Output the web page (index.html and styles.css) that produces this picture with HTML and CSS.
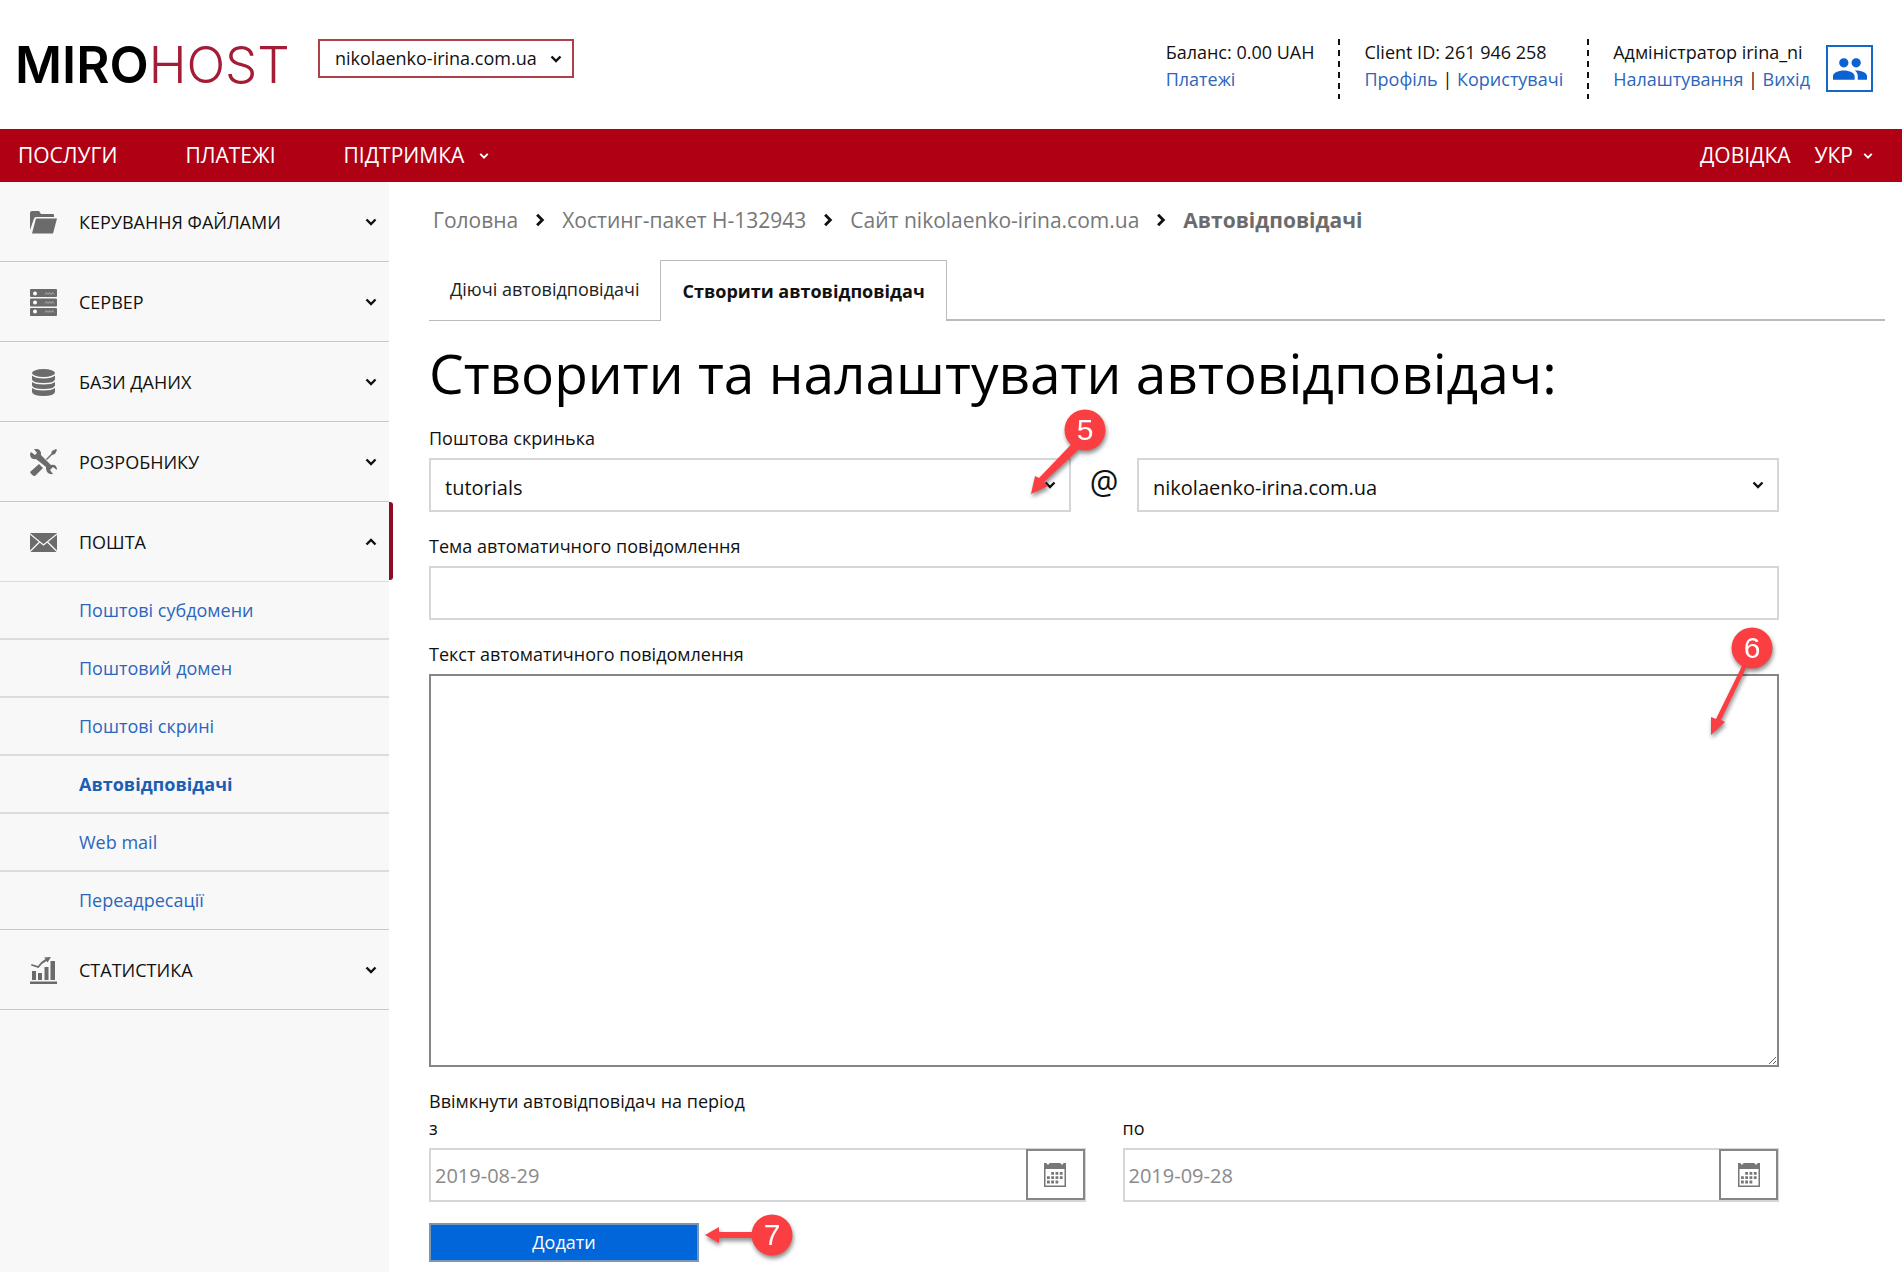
FILE: index.html
```html
<!DOCTYPE html>
<html lang="uk">
<head>
<meta charset="utf-8">
<title>Автовідповідачі — MIROHOST</title>
<meta name="viewport" content="width=device-width, initial-scale=1">
<link rel="stylesheet" href="styles.css">
</head>
<body>
<svg class="defs" aria-hidden="true">
  <symbol id="chev" viewBox="0 0 12 8"><path d="M1.500 1.500 6 6l4.500-4.500" fill="none" stroke="currentColor" stroke-width="2.400"/></symbol>
  <symbol id="cal" viewBox="0 0 22 24"><path fill="currentColor" d="M0 0h2.500q.2 1.500 1.500 1.500T5.500 0h11q.2 1.500 1.500 1.500T19.500 0H22v24H0zM1.500 6v16.500h19V6z"/><path fill="currentColor" d="M7.200 9H10v2.800H7.200zM11.500 9h2.800v2.800h-2.800zM15.800 9h2.800v2.800h-2.800zM3 13.300h2.800v2.800H3zM7.200 13.300H10v2.800H7.200zM11.500 13.300h2.800v2.800h-2.800zM15.800 13.300h2.800v2.800h-2.800zM3 17.600h2.800v2.800H3zM7.200 17.600H10v2.800H7.200zM11.500 17.600h2.800v2.800h-2.800z"/></symbol>
</svg>
<header class="header">
  <a class="logo" href="#"><span class="logo-miro">MIRO</span><span class="logo-host">HOST</span></a>
  <div class="select-wrap site-select">
    <select aria-label="Сайт"><option>nikolaenko-irina.com.ua</option></select>
    <svg class="chev"><use href="#chev"/></svg>
  </div>
  <div class="account">
    <div class="account-col"><span>Баланс: 0.00 UAH</span><span><a href="#">Платежі</a></span></div>
    <div class="account-col"><span>Client ID: 261 946 258</span><span><a href="#">Профіль</a> | <a href="#">Користувачі</a></span></div>
    <div class="account-col"><span>Адміністратор irina_ni</span><span><a href="#">Налаштування</a> | <a href="#">Вихід</a></span></div>
    <button class="users" type="button" aria-label="Користувачі">
      <svg viewBox="1 5 22 14"><path fill="currentColor" d="M16 11c1.660 0 2.990-1.340 2.990-3S17.660 5 16 5s-3 1.340-3 3 1.340 3 3 3zm-8 0c1.660 0 2.990-1.340 2.990-3S9.660 5 8 5 5 6.340 5 8s1.340 3 3 3zm0 2c-2.330 0-7 1.170-7 3.500V19h14v-2.500c0-2.330-4.670-3.500-7-3.500zm8 0c-.290 0-.620.020-.970.050 1.160.840 1.970 1.970 1.970 3.450V19h6v-2.500c0-2.330-4.670-3.500-7-3.500z"/></svg>
    </button>
  </div>
</header>
<nav class="nav">
  <a href="#">ПОСЛУГИ</a>
  <a href="#">ПЛАТЕЖІ</a>
  <a class="has-menu" href="#">ПІДТРИМКА <svg class="chev"><use href="#chev"/></svg></a>
  <div class="nav-right">
    <a href="#">ДОВІДКА</a>
    <a class="lang" href="#">УКР <svg class="chev"><use href="#chev"/></svg></a>
  </div>
</nav>
<div class="layout">
  <aside class="sidebar">
    <a class="item" href="#">
      <svg class="icon" viewBox="0 0 27 27"><path d="M0 24V4q0-2 2-2h7l2 3h12q1 0 1 1v2H6q-1.500 0-2 1.500L0 21zM6 9.500h21L23 24.500H2z"/></svg>
      <span>КЕРУВАННЯ ФАЙЛАМИ</span><svg class="chev"><use href="#chev"/></svg></a>
    <a class="item" href="#">
      <svg class="icon" viewBox="0 0 27 27"><rect width="27" height="8" rx="1"/><rect y="9.500" width="27" height="8" rx="1"/><rect y="19" width="27" height="8" rx="1"/><g fill="#fff"><circle cx="5" cy="4.500" r="2"/><circle cx="5" cy="13.500" r="2"/><circle cx="5" cy="22.500" r="2"/></g><path d="M15 5.500l1.500-2 1.500 2 1.500-2 1.500 2 1.500-2 1.500 2M15 14.500l1.500-2 1.500 2 1.500-2 1.500 2 1.500-2 1.500 2M15 23.500l1.500-2 1.500 2 1.500-2 1.500 2 1.500-2 1.500 2" fill="none" stroke="#bbb" stroke-width=".8"/></svg>
      <span>СЕРВЕР</span><svg class="chev"><use href="#chev"/></svg></a>
    <a class="item" href="#">
      <svg class="icon" viewBox="0 0 27 27"><ellipse cx="13.500" cy="4" rx="11.500" ry="4"/><path d="M2 6.500q3 3 11.500 3t11.500-3v4q-1 3.500-11.500 3.500T2 10.500zM2 13q3 2.500 11.500 2.500T25 13v3.500q-1 3.500-11.500 3.500T2 16.500zM2 19q3 2.500 11.500 2.500T25 19v4q-1 4-11.500 4T2 23z"/></svg>
      <span>БАЗИ ДАНИХ</span><svg class="chev"><use href="#chev"/></svg></a>
    <a class="item" href="#">
      <svg class="icon" viewBox="0 0 27 27"><path d="M0 5 1 3l4 3 2-2-3-4q6-1 7 4v2l10 10q6-1 6 5l-4-3-3 3 3 4q-6 1-7-5v-2L6 10Q0 11 0 5zM16 10l5-5 1-3 4-2 1 1-2 4-3 1-5 5zM9 15l4 4-8 8q-3 0-5-4z"/></svg>
      <span>РОЗРОБНИКУ</span><svg class="chev"><use href="#chev"/></svg></a>
    <a class="item open" href="#">
      <svg class="icon" viewBox="0 0 27 27"><rect y="4" width="27" height="19" rx="1"/><path d="M0 5l13.500 11L27 5M0 22.500 9.500 13M27 22.500 17.500 13" fill="none" stroke="#f8f8f8" stroke-width="1.300"/></svg>
      <span>ПОШТА</span><svg class="chev"><use href="#chev"/></svg></a>
    <a class="subitem" href="#">Поштові субдомени</a>
    <a class="subitem" href="#">Поштовий домен</a>
    <a class="subitem" href="#">Поштові скрині</a>
    <a class="subitem current" href="#">Автовідповідачі</a>
    <a class="subitem" href="#">Web mail</a>
    <a class="subitem last" href="#">Переадресації</a>
    <a class="item" href="#">
      <svg class="icon" viewBox="0 0 27 27"><path d="M0 24.500h27V27H0zM2 14h4v9H2zM8 16h4v7H8zM14.500 10h4v13h-4zM20.500 4H25v19h-4.500z"/><path d="M14 .5 21 0l-3.500 5.500-1-1.500Q12 6 8.500 11L1 8.500l.5-1.500L8 9q3.500-5 7.500-7z"/></svg>
      <span>СТАТИСТИКА</span><svg class="chev"><use href="#chev"/></svg></a>
  </aside>
  <main class="main">
    <nav class="crumbs" aria-label="Навігація">
      <a href="#">Головна</a><svg class="chev"><use href="#chev"/></svg>
      <a href="#">Хостинг-пакет H-132943</a><svg class="chev"><use href="#chev"/></svg>
      <a href="#">Сайт nikolaenko-irina.com.ua</a><svg class="chev"><use href="#chev"/></svg>
      <b>Автовідповідачі</b>
    </nav>
    <div class="tabs">
      <a class="tab" href="#">Діючі автовідповідачі</a>
      <a class="tab active" href="#">Створити автовідповідач</a>
    </div>
    <h1>Створити та налаштувати автовідповідач:</h1>
    <form class="form">
      <label for="box">Поштова скринька</label>
      <div class="mailbox">
        <div class="select-wrap">
          <select id="box"><option>tutorials</option></select>
          <svg class="chev"><use href="#chev"/></svg>
          <svg class="callout c5" viewBox="0 0 90 100"><path d="M64 40 17 84l4 4-17 8 4-18 4 2 46-48z"/><circle cx="58" cy="32" r="20.500"/><text x="58" y="42">5</text></svg>
        </div>
        <span class="at">@</span>
        <div class="select-wrap">
          <select aria-label="Домен"><option>nikolaenko-irina.com.ua</option></select>
          <svg class="chev"><use href="#chev"/></svg>
        </div>
      </div>
      <label for="subject">Тема автоматичного повідомлення</label>
      <input class="field" id="subject" type="text">
      <label for="body">Текст автоматичного повідомлення</label>
      <div class="body-wrap">
        <textarea id="body"></textarea>
        <svg class="callout c6" viewBox="0 0 80 120"><path d="M46 39 20 93l4 2-14 13V90l5 2 26-53z"/><circle cx="51" cy="21" r="20.500"/><text x="51" y="31">6</text></svg>
      </div>
      <div class="period-title">Ввімкнути автовідповідач на період</div>
      <div class="period">
        <div><label for="from">з</label>
          <div class="date"><input id="from" type="text" value="2019-08-29"><button type="button" aria-label="Календар"><svg><use href="#cal"/></svg></button></div></div>
        <div><label for="to">по</label>
          <div class="date"><input id="to" type="text" value="2019-09-28"><button type="button" aria-label="Календар"><svg><use href="#cal"/></svg></button></div></div>
      </div>
      <div class="submit-wrap">
        <button class="submit" type="submit">Додати</button>
        <svg class="callout c7" viewBox="0 0 100 60"><path d="M50 21H16v-5L2 24l14 8v-5h34z"/><circle cx="69" cy="24" r="20.500"/><text x="69" y="34">7</text></svg>
      </div>
    </form>
  </main>
</div>
</body>
</html>
```
FILE: styles.css
```css
* { box-sizing: border-box; }
body {
  margin: 0;
  background: #fff;
  color: #111;
  font: 18px/27px "Open Sans", sans-serif;
}
a { color: #2b66bd; text-decoration: none; }
select, input, textarea, button { font: inherit; color: inherit; border-radius: 0; }
.defs { display: none; }
.chev { width: 12px; height: 8px; flex: none; color: #111; }

.header { display: flex; align-items: flex-start; height: 129px; padding: 39px 29px 0 15px; }
.logo { display: flex; width: 273px; color: #000; font: 51px/51px Inter, sans-serif; }
.logo-miro { font-weight: 600; }
.logo-host { font-weight: 300; color: #a51c36; }

.select-wrap { position: relative; }
.select-wrap select { appearance: none; width: 100%; background: #fff; }
.select-wrap .chev { position: absolute; right: 15px; top: 50%; margin-top: -4px; pointer-events: none; }
.site-select { margin-left: 30px; width: 256px; }
.site-select select { height: 39px; padding: 0 15px; border: 2px solid #b04048; font-size: 18px; }
.site-select .chev { right: 12px; }

.account { display: flex; margin-left: auto; }
.account-col { display: flex; flex-direction: column; height: 60px; white-space: nowrap; }
.account-col + .account-col {
  margin-left: 24px;
  padding-left: 26px;
  background: repeating-linear-gradient(#111 0 6px, transparent 6px 11px) left top / 2px 100% no-repeat;
}
.users {
  display: flex; align-items: center; justify-content: center;
  width: 47px; height: 47px; margin: 6px 0 0 16px; padding: 0;
  border: 2px solid #1268c4; background: #fff; color: #0b63d1;
}
.users svg { width: 34px; height: 22px; }

.nav { display: flex; align-items: center; gap: 68px; height: 53px; padding: 0 29px 0 18px; background: #b00014; font-size: 21px; }
.nav a { color: #fff; display: flex; align-items: center; gap: 15px; }
.nav .chev { color: #fff; width: 10px; }
.nav-right { display: flex; gap: 24px; margin-left: auto; }
.nav .lang { gap: 10px; }

.layout { display: flex; min-height: calc(100vh - 182px); }
.sidebar { flex: none; width: 389px; background: #f8f8f8; }
.item { position: relative; display: flex; align-items: center; height: 80px; padding: 1px 12px 0 30px; border-bottom: 1px solid #c8c8c8; color: #111; }
.item span { flex: 1; margin-left: 22px; }
.icon { width: 27px; height: 27px; fill: #6b6b6b; }
.open { border-color: #dcdcdc; }
.open .chev { transform: rotate(180deg); }
.open::after { content: ""; position: absolute; left: 100%; top: 0; bottom: 1px; width: 4px; background: #900a26; border-radius: 0 3px 3px 0; }
.subitem { display: flex; align-items: center; height: 58px; padding-left: 79px; border-bottom: 2px solid #dcdcdc; }
.current { font-weight: 700; color: #1a5fb4; }
.last { border-bottom: 1px solid #c8c8c8; }

.main { flex: 1; min-width: 0; padding: 23px 17px 10px 40px; }
.crumbs { display: flex; align-items: center; padding-left: 4px; font-size: 21px; line-height: 30px; color: #6b6b6b; }
.crumbs a { color: #777; }
.crumbs .chev { width: 14px; height: 10px; margin: 0 15px; transform: rotate(-90deg); }
.tabs { display: flex; align-items: flex-end; margin-top: 25px; }
.tabs::after { content: ""; flex: 1; border-bottom: 2px solid #bbb; }
.tab { height: 60px; padding: 15px 21px 0; border-bottom: 1px solid #bbb; color: #222; }
.active { height: 61px; padding-top: 17px; border: 1px solid #bbb; border-bottom: 0; font-weight: 700; color: #111; }
h1 { margin: 14px 0; font-size: 55px; line-height: 76px; font-weight: 400; color: #000; white-space: nowrap; }

.form { margin-right: 106px; }
.form label { display: block; }
.mailbox { display: grid; grid-template-columns: 1fr 66px 1fr; margin: 6px 0 21px; }
.at { text-align: center; font-size: 32px; line-height: 48px; }
.mailbox select, .field, .date { height: 54px; border: 2px solid #d6d6d6; font-size: 20px; }
.mailbox select { padding: 4px 14px 0; }
.field { display: block; width: 100%; margin: 6px 0 21px; padding: 0 5px; }
.body-wrap { position: relative; margin-top: 6px; }
textarea { display: block; width: 100%; height: 393px; border: 2px solid #868686; padding: 6px; resize: vertical; }
.period-title { margin-top: 21px; }
.period { display: grid; grid-template-columns: 1fr 1fr; gap: 37px; }
.date { display: flex; margin-top: 6px; background: #fff; }
.date input { flex: 1; min-width: 0; padding: 0 4px; border: 0; background: none; color: #8a8a8a; }
.date button { display: flex; align-items: center; justify-content: center; width: 59px; margin: -1px -1px 0 0; padding: 0; border: 2px solid #868686; background: #fff; color: #777; }
.date svg { width: 22px; height: 24px; }
.submit-wrap { position: relative; width: 270px; margin-top: 21px; }
.submit { display: block; width: 100%; height: 39px; padding: 0; border: 2px solid #7b95b4; background: #0066d9; color: #fff; }

.callout { position: absolute; overflow: visible; pointer-events: none; fill: #fb3e42; filter: drop-shadow(1px 3px 2px rgba(0, 0, 0, .45)); }
.callout text { fill: #fff; font: 30px "Liberation Sans", sans-serif; text-anchor: middle; }
.select-wrap .c5 { width: 90px; height: 100px; right: -46px; top: -60px; }
.c6 { width: 80px; height: 120px; right: -2px; top: -47px; }
.c7 { width: 100px; height: 60px; left: 100%; top: -12px; margin-left: 4px; }
```
